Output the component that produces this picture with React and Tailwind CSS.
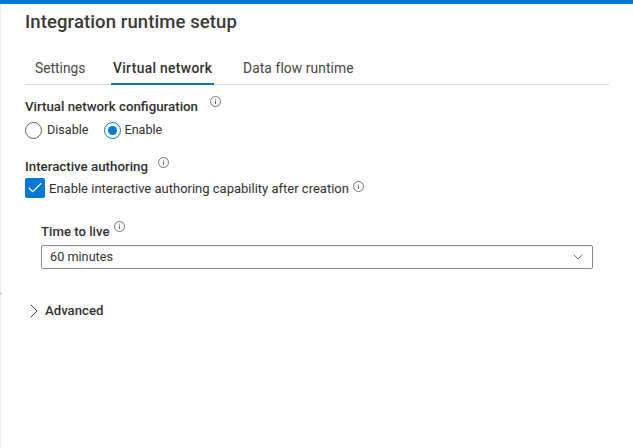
import { Check, ChevronDown, ChevronRight } from 'lucide-react';

function Info({ className = '' }) {
  return (
    <svg width="11" height="11" viewBox="0 0 11 11" className={className} fill="none">
      <circle cx="5.5" cy="5.5" r="5" stroke="#555" strokeWidth="0.8" />
      <path d="M5.5 4.6v3.4M5.5 2.8v0.9" stroke="#555" strokeWidth="0.9" />
    </svg>
  );
}

export default function App() {
  return (
    <div className="h-[448px] w-[633px] overflow-hidden bg-white text-[13px] leading-[18px] text-[#323130] font-['Roboto','Open_Sans',sans-serif]">
      <div className="h-1 bg-[#0078d4]" />
      <div className="relative h-[444px] border-l border-[#ececec] pl-6 pr-6">
        <span className="absolute -left-px top-[289px] h-px w-[2px] bg-[#b5b5b5]" />
        <h1 className="pt-[6px] text-[18.5px] leading-[24px] font-medium tracking-[0.1px] text-[#3b3a39]">Integration runtime setup</h1>

        <div className="mt-[21px] flex h-[30px] border-b border-[#dcdcdc] pl-[10px] text-[13.8px]">
          <div className="w-[76px] pt-[4px] text-[#484644]">Settings</div>
          <div className="-mb-px h-[30px] w-[103px] border-b-2 border-[#0078d4] pl-[2px] pt-[4px] font-medium tracking-[0.35px]">Virtual network</div>
          <div className="pl-[29px] pt-[4px] tracking-[0.1px] text-[#484644]">Data flow runtime</div>
        </div>

        <div className="mt-[13px] flex items-start">
          <span className="text-[13.3px] font-medium">Virtual network configuration</span>
          <Info className="ml-[12px] mt-[-2px]" />
        </div>
        <div className="mt-[5px] flex items-center text-[12.6px]">
          <span className="h-[17px] w-[17px] rounded-full border border-[#605e5c]" />
          <span className="ml-[5px]">Disable</span>
          <span className="ml-[15px] flex h-[17px] w-[17px] items-center justify-center rounded-full border border-[#0078d4]">
            <span className="h-[9px] w-[9px] rounded-full bg-[#0078d4]" />
          </span>
          <span className="ml-[4px]">Enable</span>
        </div>

        <div className="mt-[19px] flex items-start">
          <span className="text-[13.3px] font-medium">Interactive authoring</span>
          <Info className="ml-[10px] mt-[-1px]" />
        </div>
        <div className="mt-[2px] flex items-center">
          <span className="flex h-5 w-5 items-center justify-center rounded-[2px] bg-[#0078d4]">
            <Check size={18} color="#fff" strokeWidth={1.5} />
          </span>
          <span className="ml-1 mt-[2px]">Enable interactive authoring capability after creation</span>
          <Info className="ml-[4px] mt-[-4px]" />
        </div>

        <div className="ml-4 mr-4 mt-[25px]">
          <div className="flex items-start">
            <span className="text-[13.2px] font-medium">Time to live</span>
            <Info className="ml-[5px] mt-[-2px]" />
          </div>
          <div className="mt-[4px] flex h-6 items-center justify-between rounded-[2px] border border-[#8a8886] pl-2 pr-[6px] text-[12.7px]">
            <span>60 minutes</span>
            <ChevronDown size={16} color="#555" strokeWidth={1.2} />
          </div>
        </div>

        <div className="mt-[30px] flex items-center">
          <ChevronRight size={24} color="#444" strokeWidth={1} className="-ml-[3px] -mr-px" />
          <span className="text-[13.2px] font-medium">Advanced</span>
        </div>
      </div>
    </div>
  );
}
